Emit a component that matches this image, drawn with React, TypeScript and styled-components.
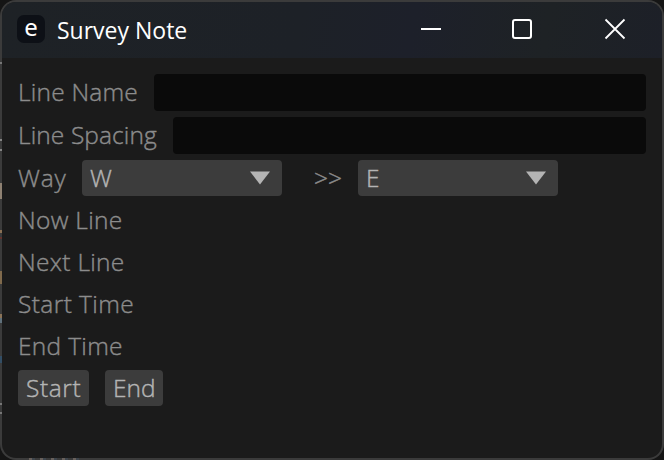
import React from "react";
import styled, { createGlobalStyle } from "styled-components";

const GlobalStyle = createGlobalStyle`
  * { box-sizing: border-box; }
  html, body { margin: 0; background: #131313; overflow: hidden; }
`;

const Desktop = styled.div`
  width: 664px;
  height: 460px;
  background: #151515;
`;

const Window = styled.main`
  width: 664px;
  height: 460px;
  display: flex;
  flex-direction: column;
  overflow: hidden;
  border: 2px solid transparent;
  border-radius: 16px;
  background:
    linear-gradient(#1b1b1b, #1b1b1b) padding-box,
    linear-gradient(#3b3b3b, #3b3b3b) 84px 100% / 580px 2px no-repeat border-box,
    repeating-linear-gradient(90deg, #3b3b3b 0 5px, #69615c 5px 8px, #3f464d 8px 11px) 24px 100% / 60px 2px no-repeat border-box,
    linear-gradient(#3b3b3b 0 62px, #777 62px 64px, #3b3b3b 64px 139px, #858585 139px 141px, #3b3b3b 141px 149px, #858585 149px 151px, #3b3b3b 151px 183px, #8e8172 183px 199px, #3b3b3b 199px 230px, #8a7054 230px 233px, #3b3b3b 233px 237px, #63342e 237px 239px, #3b3b3b 239px 271px, #806a4c 271px 284px, #3b3b3b 284px 314px, #8a7358 314px 318px, #60717c 318px 323px, #3b3b3b 323px 356px, #334e65 356px 363px, #3b3b3b 363px 403px, #777 403px 405px, #3b3b3b 405px 412px, #777 412px 414px, #3b3b3b 414px) 0 0 / 2px 100% no-repeat border-box,
    linear-gradient(#3b3b3b, #3b3b3b) border-box;
`;

const TitleBar = styled.header`
  height: 56px;
  flex: none;
  display: flex;
  align-items: center;
  background: linear-gradient(100deg, #1e2226 0%, #1d2127 45%, #1d202a 62%, #1e2225 82%, #1d2028 100%);
  padding: 0 36px 2px 15px;
`;

const AppIcon = styled.div`
  width: 28px;
  height: 28px;
  border-radius: 7px;
  background: #0d1016;
  color: #fff;
  font: 400 24px/24px "Noto Sans", sans-serif;
  text-align: center;
`;

const Title = styled.h1`
  margin: 2px 0 0 12px;
  flex: 1;
  color: #fff;
  font: 400 23px/32px "Open Sans", sans-serif;
  white-space: nowrap;
`;

const Controls = styled.div`
  display: flex;
  gap: 69px;
  svg { display: block; }
  svg:last-child { margin-left: 2px; }
`;

const Form = styled.section`
  padding: 16px 16px 0;
  display: flex;
  flex-direction: column;
`;

const Row = styled.div<{ $height: number }>`
  height: ${(p) => p.$height}px;
  display: flex;
  align-items: flex-start;
`;

const Label = styled.span<{ $width?: number; $track?: number }>`
  width: ${(p) => (p.$width ? `${p.$width}px` : "auto")};
  flex: none;
  color: #8c8c8c;
  font: 300 24.5px/36px "Open Sans", sans-serif;
  letter-spacing: ${(p) => p.$track ?? 0}px;
  -webkit-text-stroke: 0.4px currentColor;
  white-space: nowrap;
`;

const Field = styled.input`
  flex: 1;
  min-width: 0;
  height: 37px;
  border: 0;
  border-radius: 4px;
  background: #0a0a0a;
  color: #b4b4b4;
  outline: 0;
`;

const Select = styled.button`
  width: 200px;
  height: 36px;
  display: flex;
  align-items: center;
  justify-content: space-between;
  border: 0;
  border-radius: 4px;
  padding: 0 12px 0 8px;
  background: #3c3c3c;
  color: #b4b4b4;
  font: 300 24.5px/36px "Open Sans", sans-serif;
  -webkit-text-stroke: 0.4px currentColor;
`;

const Arrow = styled.span`
  display: flex;
`;

const Separator = styled(Label)`
  width: 76px;
  padding-left: 32px;
`;

const Actions = styled.div`
  display: flex;
  gap: 16px;
`;

const Button = styled.button<{ $width: number; $track?: number }>`
  width: ${(p) => p.$width}px;
  height: 36px;
  border: 0;
  border-radius: 4px;
  padding: 0 0 0 8px;
  background: #3c3c3c;
  color: #b4b4b4;
  font: 300 24.5px/36px "Open Sans", sans-serif;
  -webkit-text-stroke: 0.4px currentColor;
  letter-spacing: ${(p) => p.$track ?? 0}px;
  text-align: left;
  white-space: nowrap;
`;

const Triangle = () => (
  <Arrow>
    <svg width="20" height="14" viewBox="0 0 20 14">
      <path d="M0 0.5H20L10 13.5Z" fill="#b4b4b4" />
    </svg>
  </Arrow>
);

export default function App() {
  return (
    <Desktop>
      <GlobalStyle />
      <Window>
        <TitleBar>
          <AppIcon>e</AppIcon>
          <Title>Survey Note</Title>
          <Controls>
            <svg width="22" height="22" viewBox="0 0 22 22">
              <path d="M1 11H21" stroke="#fff" strokeWidth="2" />
            </svg>
            <svg width="22" height="22" viewBox="0 0 22 22">
              <rect x="2" y="2" width="18" height="18" rx="2" fill="none" stroke="#fff" strokeWidth="2" />
            </svg>
            <svg width="22" height="22" viewBox="0 0 22 22">
              <path d="M1.5 1.5L20.5 20.5M20.5 1.5L1.5 20.5" stroke="#fff" strokeWidth="1.8" />
            </svg>
          </Controls>
        </TitleBar>
        <Form>
          <Row $height={43}>
            <Label $width={136} $track={0.2}>Line Name</Label>
            <Field aria-label="Line Name" />
          </Row>
          <Row $height={43}>
            <Label $width={155} $track={0.1}>Line Spacing</Label>
            <Field aria-label="Line Spacing" />
          </Row>
          <Row $height={42}>
            <Label $width={64} $track={0.8}>Way</Label>
            <Select>W<Triangle /></Select>
            <Separator>&gt;&gt;</Separator>
            <Select>E<Triangle /></Select>
          </Row>
          <Row $height={42}><Label $track={0.3}>Now Line</Label></Row>
          <Row $height={42}><Label $track={0.3}>Next Line</Label></Row>
          <Row $height={42}><Label $track={0.4}>Start Time</Label></Row>
          <Row $height={42}><Label $track={0.3}>End Time</Label></Row>
          <Actions>
            <Button $width={71} $track={0.6}>Start</Button>
            <Button $width={58}>End</Button>
          </Actions>
        </Form>
      </Window>
    </Desktop>
  );
}
